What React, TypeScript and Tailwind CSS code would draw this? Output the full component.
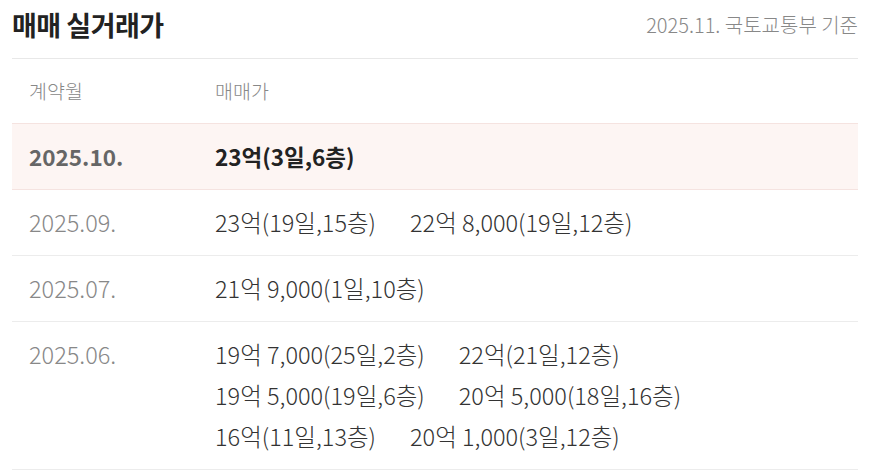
import React from "react";

type Trade = { month: string; deals: string[]; highlight?: boolean };

const trades: Trade[] = [
  { month: "2025.10.", deals: ["23억(3일,6층)"], highlight: true },
  { month: "2025.09.", deals: ["23억(19일,15층)", "22억 8,000(19일,12층)"] },
  { month: "2025.07.", deals: ["21억 9,000(1일,10층)"] },
  {
    month: "2025.06.",
    deals: [
      "19억 7,000(25일,2층)",
      "22억(21일,12층)",
      "19억 5,000(19일,6층)",
      "20억 5,000(18일,16층)",
      "16억(11일,13층)",
      "20억 1,000(3일,12층)",
    ],
  },
];

export default function App() {
  return (
    <div className="min-h-[473px] w-[879px] bg-white pl-3 pr-[21px] font-['Noto_Sans_CJK_KR','Noto_Sans',sans-serif] text-[#333]">
      <div className="flex h-[59px] items-center justify-between border-b border-[#e8e8e8] pb-2">
        <h2 className="text-[27px] font-bold tracking-[-0.5px] text-[#222]">매매 실거래가</h2>
        <span className="text-[20px] font-light text-[#888]">2025.11. 국토교통부 기준</span>
      </div>

      <div className="flex h-[64px] items-center text-[19.5px] font-light text-[#888]">
        <div className="w-[203px] pl-[17px]">계약월</div>
        <div>매매가</div>
      </div>

      {trades.map((t) => (
        <div
          key={t.month}
          className={
            t.highlight
              ? "flex border-y border-[#f5e3e0] bg-[#fdf5f3] py-3 text-[23.5px] leading-[41px]"
              : "flex border-b border-[#ececec] py-3 text-[23.5px] leading-[41px]"
          }
        >
          <div
            className={
              t.highlight
                ? "w-[203px] shrink-0 pl-[17px] text-[22.5px] font-bold text-[#666]"
                : "w-[203px] shrink-0 pl-[17px] font-light text-[#888]"
            }
          >
            {t.month}
          </div>
          <div
            className={
              t.highlight
                ? "flex flex-1 flex-wrap gap-x-[34px] pr-5 text-[22.5px] font-bold text-[#222]"
                : "flex flex-1 flex-wrap gap-x-[34px] pr-5 font-light text-[#333]"
            }
          >
            {t.deals.map((d) => (
              <span key={d}>{d}</span>
            ))}
          </div>
        </div>
      ))}
    </div>
  );
}
